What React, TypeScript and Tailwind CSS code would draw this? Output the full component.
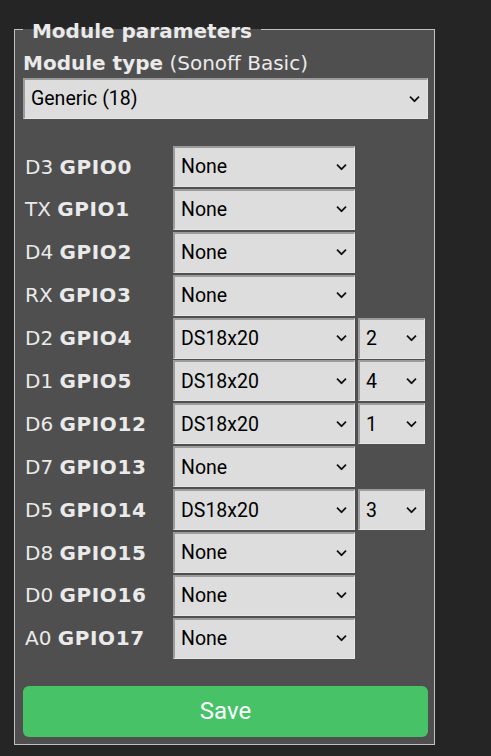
import React from "react";

const rows: { pin: string; gpio: string; value: string; idx?: string }[] = [
  { pin: "D3", gpio: "GPIO0", value: "None" },
  { pin: "TX", gpio: "GPIO1", value: "None" },
  { pin: "D4", gpio: "GPIO2", value: "None" },
  { pin: "RX", gpio: "GPIO3", value: "None" },
  { pin: "D2", gpio: "GPIO4", value: "DS18x20", idx: "2" },
  { pin: "D1", gpio: "GPIO5", value: "DS18x20", idx: "4" },
  { pin: "D6", gpio: "GPIO12", value: "DS18x20", idx: "1" },
  { pin: "D7", gpio: "GPIO13", value: "None" },
  { pin: "D5", gpio: "GPIO14", value: "DS18x20", idx: "3" },
  { pin: "D8", gpio: "GPIO15", value: "None" },
  { pin: "D0", gpio: "GPIO16", value: "None" },
  { pin: "A0", gpio: "GPIO17", value: "None" },
];

function Chevron() {
  return (
    <svg
      className="pointer-events-none absolute right-[8px] top-1/2 -translate-y-1/2"
      width="11"
      height="7"
      viewBox="0 0 11 7"
      fill="none"
    >
      <path d="M1 1.2 L5.5 5.7 L10 1.2" stroke="#111" strokeWidth="1.7" />
    </svg>
  );
}

function Select({ value, className }: { value: string; className?: string }) {
  return (
    <div className={"relative h-[41px] " + (className ?? "")}>
      <select
        defaultValue={value}
        className="h-full w-full appearance-none border-l-2 border-t-2 border-b border-r border-l-[#9c9c9c] border-t-[#9c9c9c] border-b-[#e6e6e6] border-r-[#e6e6e6] bg-[#dddddd] pl-[6px] text-[19.5px] text-black outline-none"
        style={{ fontFamily: "Roboto, 'Liberation Sans', sans-serif" }}
      >
        <option value={value}>{value}</option>
      </select>
      <Chevron />
    </div>
  );
}

export default function App() {
  return (
    <div
      className="min-h-[756px] w-full bg-[#252525] pt-[12px] text-[20px] text-[#eaeaea]"
      style={{ fontFamily: "'DejaVu Sans', Verdana, sans-serif" }}
    >
      <fieldset className="ml-[14px] w-[421px] border border-[#c0c0c0] bg-[#4f4f4f] pb-[7px] pl-[8px] pr-[6px]">
        <legend className="px-[2px] pt-[4px] font-bold leading-normal">
          {"\u00a0Module parameters\u00a0"}
        </legend>
        <div className="mt-[2px] leading-normal">
          <b>Module type</b> (Sonoff Basic)
        </div>
        <Select value="Generic (18)" className="w-full" />
        <div className="mt-[27px] flex flex-col gap-y-[1.9px]">
          {rows.map((r) => (
            <div key={r.gpio} className="flex h-[41px] items-center">
              <div className="w-[150px] shrink-0 pl-[2px] leading-normal">
                {r.pin} <b className="tracking-[0.6px]">{r.gpio}</b>
              </div>
              <Select value={r.value} className="w-[182px] shrink-0" />
              {r.idx ? <Select value={r.idx} className="ml-[3px] w-[67px] shrink-0" /> : null}
            </div>
          ))}
        </div>
        <button
          className="mt-[27px] h-[51px] w-full rounded-[6px] bg-[#47c266] text-[24px] text-[#faffff]"
          style={{ fontFamily: "Roboto, 'Liberation Sans', sans-serif" }}
        >
          Save
        </button>
      </fieldset>
    </div>
  );
}
